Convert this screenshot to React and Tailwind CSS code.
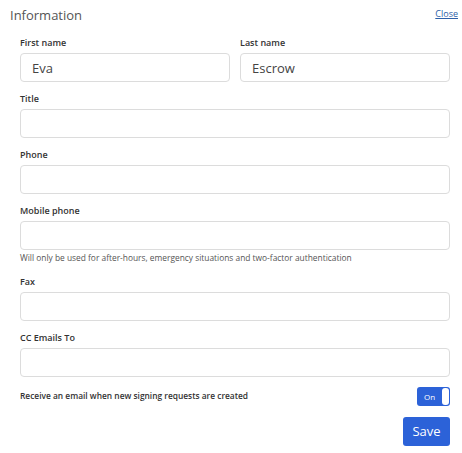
import { useState } from "react";

// Contact information form

const font = { fontFamily: '"Open Sans", sans-serif' };

function Field({ label, value = "", hint }) {
  return (
    <div className="flex flex-col">
      <label className="text-[9px] leading-[12px] font-semibold text-[#333]">{label}</label>
      <input
        defaultValue={value}
        className="mt-[4px] h-[29px] w-full rounded-[4px] border border-[#dcdcdc] bg-white px-[11px] text-[13px] text-[#444] outline-none"
      />
      {hint && (
        <p className="mt-[2px] text-[8.4px] leading-[12px] text-[#555]">{hint}</p>
      )}
    </div>
  );
}

export default function App() {
  const [on, setOn] = useState(true);

  return (
    <div className="h-[453px] w-[462px] bg-white" style={font}>
      {/* ── Header ─────────────────────────────────────────── */}
      <div className="flex items-start justify-between pl-[10px] pr-[4px] pt-[5px]">
        <h2 className="text-[13px] leading-[20px] text-[#555]">Information</h2>
        <a href="#" className="mt-[2px] text-[9px] leading-[14px] text-[#2d5fa8] underline">
          Close
        </a>
      </div>

      {/* ── Fields ─────────────────────────────────────────── */}
      <div className="mt-[12px] flex flex-col gap-[11px] pl-5 pr-3">
        <div className="grid grid-cols-2 gap-[10px]">
          <Field label="First name" value="Eva" />
          <Field label="Last name" value="Escrow" />
        </div>
        <Field label="Title" />
        <Field label="Phone" />
        <Field
          label="Mobile phone"
          hint="Will only be used for after-hours, emergency situations and two-factor authentication"
        />
        <div className="mt-[1px]">
          <Field label="Fax" />
        </div>
        <Field label="CC Emails To" />

        <div className="mt-[-1px] flex items-center justify-between">
          <span className="text-[8.4px] font-semibold text-[#333]">
            Receive an email when new signing requests are created
          </span>
          <button
            onClick={() => setOn(!on)}
            className="flex h-[19px] w-[33px] items-center justify-between rounded-[3px] bg-[#2c62d8] pl-[7px] pr-[1px]"
          >
            <span className="text-[8px] text-white">{on ? "On" : "Off"}</span>
            <span className="h-[17px] w-[7px] rounded-[3px] bg-white" />
          </button>
        </div>

        <div className="flex justify-end">
          <button className="h-[29px] w-[47px] rounded-[3px] bg-[#2c62d8] text-[13px] text-white">
            Save
          </button>
        </div>
      </div>
    </div>
  );
}
